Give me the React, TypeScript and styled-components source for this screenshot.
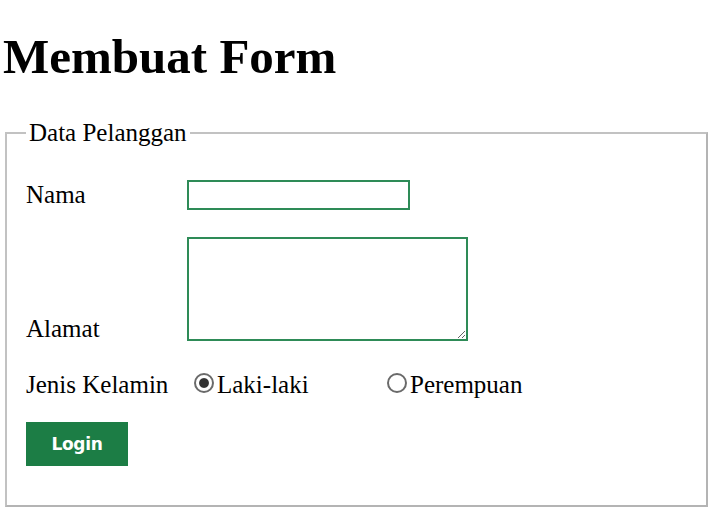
import styled, {createGlobalStyle} from "styled-components";

const GlobalStyle = createGlobalStyle`
  html, body {
    margin: 0;
    padding: 0;
    background: #ffffff;
  }
  body {
    font-family: "Liberation Serif", "Times New Roman", serif;
    color: #000000;
  }
`;

const Page = styled.div`
  padding: 29px 8px 0 3px;
`;

const Title = styled.h1`
  margin: 0 0 34px 0;
  font-size: 49px;
  line-height: 56px;
  font-weight: bold;
`;

const FieldSet = styled.fieldset`
  margin: 0 2px;
  padding: 33px 18px 39px 19px;
  border: 2px solid #c2c2c2;
  border-right-color: #b4b4b4;
  border-bottom-color: #b4b4b4;
  min-width: 0;
`;

const Legend = styled.legend`
  padding: 0 3px;
  font-size: 25px;
  line-height: 28px;
`;

const Row = styled.div<{$align?: string; $mt?: number}>`
  display: flex;
  align-items: ${(p) => p.$align || "center"};
  margin-top: ${(p) => p.$mt || 0}px;
`;

const Label = styled.label<{$drop?: number}>`
  width: 161px;
  flex-shrink: 0;
  font-size: 25px;
  line-height: 28px;
  margin-bottom: ${(p) => (p.$drop ? -p.$drop : 0)}px;
`;

const TextInput = styled.input`
  box-sizing: border-box;
  width: 223px;
  height: 30px;
  margin: 0;
  border: 2px solid #2e8b57;
  padding: 2px 4px;
  font-size: 18px;
  outline: none;
`;

const TextArea = styled.textarea`
  box-sizing: border-box;
  display: block;
  width: 281px;
  height: 104px;
  margin: 0;
  border: 2px solid #2e8b57;
  padding: 3px;
  font-size: 18px;
  outline: none;
`;

const RadioGroup = styled.div`
  display: flex;
  align-items: baseline;
`;

const Option = styled.label<{$width?: number}>`
  display: inline-block;
  width: ${(p) => (p.$width ? `${p.$width}px` : "auto")};
  font-size: 25px;
  line-height: 28px;
`;

const Radio = styled.input`
  appearance: none;
  box-sizing: border-box;
  width: 20px;
  height: 20px;
  margin: 0 3px 0 7px;
  border: 2px solid #6a6a6a;
  border-radius: 50%;
  background: #ffffff;
  vertical-align: baseline;
  outline: none;

  &:checked {
    background: radial-gradient(circle, #333333 0 4.4px, #ffffff 5.4px);
  }
`;

const LoginButton = styled.button`
  width: 102px;
  height: 44px;
  margin: 0;
  border: none;
  background-color: #1c7d45;
  color: #ffffff;
  font-family: "DejaVu Sans", Verdana, sans-serif;
  font-size: 17px;
  font-weight: bold;
  letter-spacing: -0.3px;
  cursor: pointer;
`;

export default function App() {
  return (
    <>
      <GlobalStyle />
      <Page>
        <Title>Membuat Form</Title>
        <FieldSet>
          <Legend>Data Pelanggan</Legend>

          <Row>
            <Label htmlFor="nama">Nama</Label>
            <TextInput id="nama" type="text" />
          </Row>

          <Row $align="flex-end" $mt={27}>
            <Label htmlFor="alamat" $drop={2}>
              Alamat
            </Label>
            <TextArea id="alamat" />
          </Row>

          <Row $align="baseline" $mt={30}>
            <Label>Jenis Kelamin</Label>
            <RadioGroup>
              <Option $width={193}>
                <Radio type="radio" name="jk" defaultChecked />
                Laki-laki
              </Option>
              <Option>
                <Radio type="radio" name="jk" />
                Perempuan
              </Option>
            </RadioGroup>
          </Row>

          <Row $mt={23}>
            <LoginButton type="button">Login</LoginButton>
          </Row>
        </FieldSet>
      </Page>
    </>
  );
}
